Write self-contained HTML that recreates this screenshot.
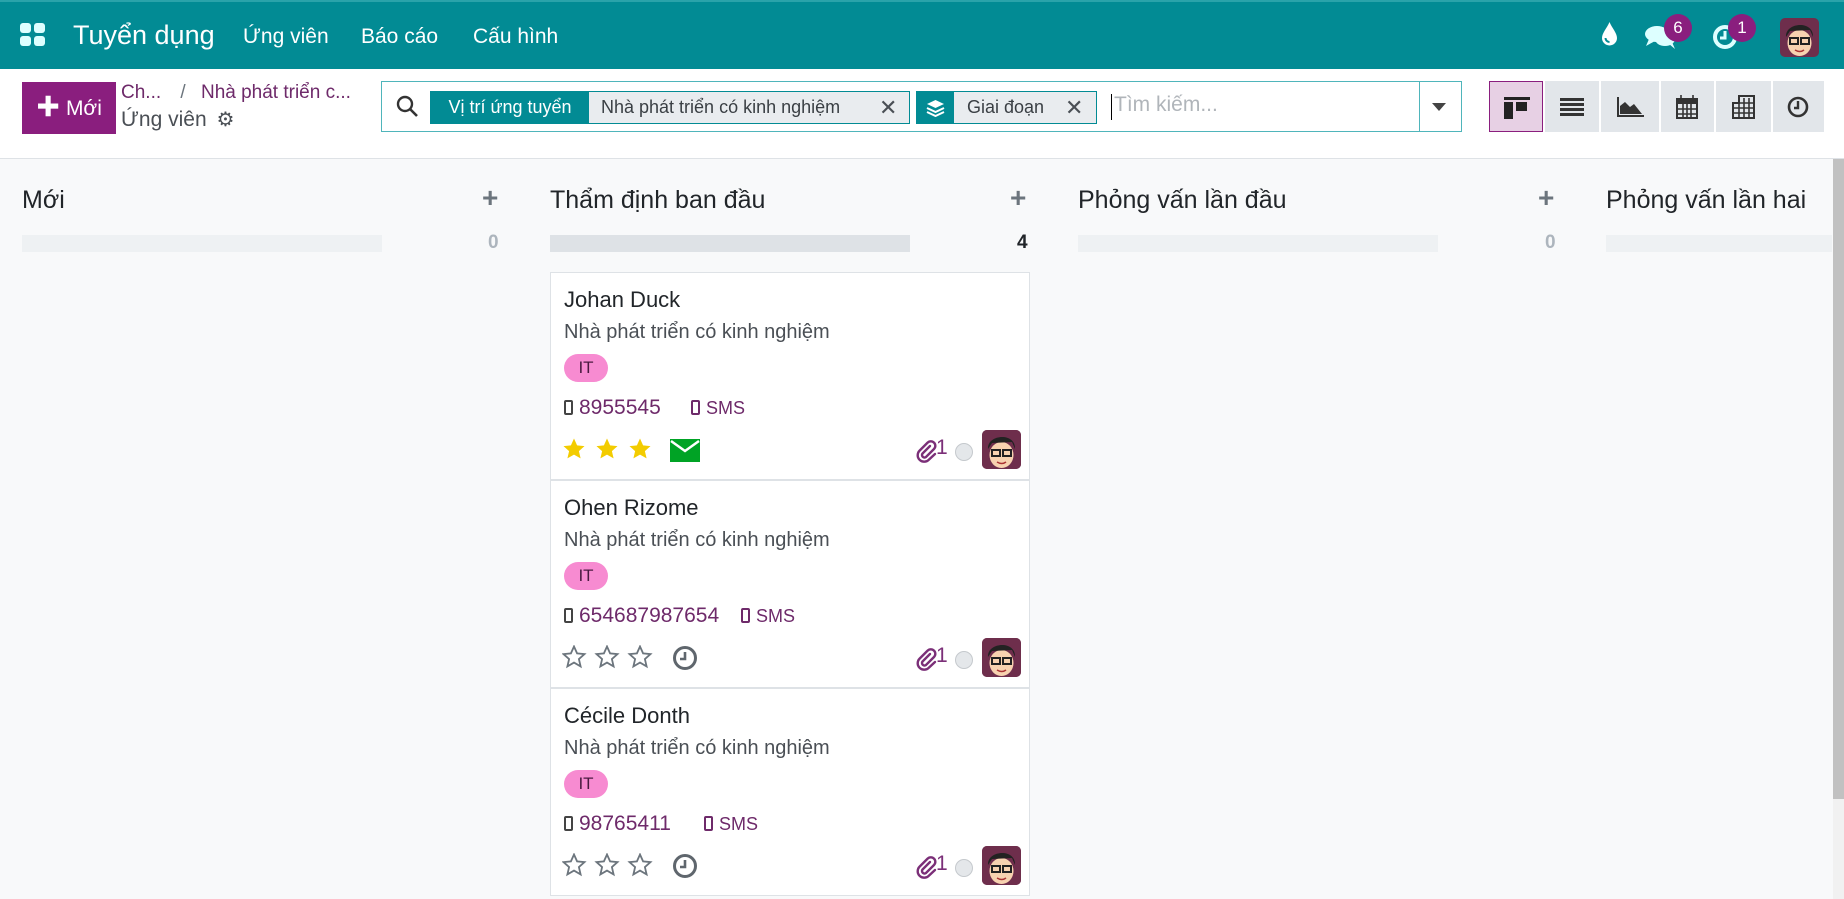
<!DOCTYPE html>
<html><head><meta charset="utf-8"><style>
*{box-sizing:border-box;margin:0;padding:0}
body{width:1844px;height:899px;overflow:hidden;font-family:"Liberation Sans","Noto Sans CJK SC",sans-serif;background:#f8f9fa;position:relative;color:#212529}
.a{position:absolute;white-space:nowrap}
.nav{left:0;top:0;width:1844px;height:69px;background:#028b94;border-top:2px solid #2aa3aa}
.nav .t{color:#fff}
.cp{left:0;top:69px;width:1844px;height:90px;background:#fff;border-bottom:1px solid #dee2e6}
.vb{top:81px;width:54px;height:51px;background:#e2e6ea}
.col-h{font-size:25px;color:#212529}
.plus{font-size:28px;color:#6c757d;font-weight:bold}
.bar{height:17px;background:#eef1f3}
.card{left:550px;width:480px;background:#fff;border:1px solid #dee2e6;height:208px}
.card .n{left:13px;top:14px;font-size:22px;color:#212529}
.card .j{left:13px;top:48px;font-size:20px;color:#4a4f55}
.card .tag{left:13px;top:81px;width:44px;height:28px;border-radius:14px;background:#f78bd1;color:#4a1a40;font-size:17px;text-align:center;line-height:28px}
.card .ph{left:13px;top:123px;font-size:21px;color:#6e2a6a}
.card .sms{top:125px;font-size:18px;color:#6e2a6a}
.card .clip{left:364px;top:163px;font-size:21px;color:#7b2f78}
.card .dot{left:404px;top:170px;width:18px;height:18px;border-radius:50%;background:#e4e7ea;border:1px solid #c5c9cd}
.card .av{left:431px;top:157px;width:39px;height:39px;border-radius:5px;background:#6e2e4c;overflow:hidden}
.pi{display:inline-block;width:9px;height:15px;border:2px solid currentColor;border-radius:2px;margin-right:6px;vertical-align:-1px}
</style></head><body>
<svg width="0" height="0" style="position:absolute"><defs>
<path id="star" d="M12 1.5l3.1 6.9 7.4.7-5.6 5 1.7 7.3L12 17.6 5.4 21.4l1.7-7.3-5.6-5 7.4-.7z"/>
<g id="clip"><path d="M15 7l-7.5 7.5a2.5 2.5 0 0 0 3.5 3.5l8-8a4.5 4.5 0 0 0-6.4-6.4l-8 8a6.5 6.5 0 0 0 9.2 9.2L20 15" stroke="#7b2f78" stroke-width="2.4" fill="none" stroke-linecap="round"/></g>
<g id="face"><rect width="39" height="39" fill="#6e2e4c"/><ellipse cx="19.5" cy="25" rx="12" ry="13" fill="#f7d2b0"/><path d="M6 19 C5 4 34 2 33 19 L30 12 L10 13z" fill="#222"/><rect x="10" y="20" width="8" height="6" fill="none" stroke="#222" stroke-width="2"/><rect x="21" y="20" width="8" height="6" fill="none" stroke="#222" stroke-width="2"/><path d="M15 32q5 3 9 0" stroke="#a33" stroke-width="1.5" fill="none"/></g>
</defs></svg>
<div class="a nav">
 <svg class="a" style="left:20px;top:21px" width="26" height="24" viewBox="0 0 26 24"><rect x="0" y="0" width="11" height="10" rx="3" fill="#dff"/><rect x="14" y="0" width="11" height="10" rx="3" fill="#dff"/><rect x="0" y="13" width="11" height="10" rx="3" fill="#dff"/><rect x="14" y="13" width="11" height="10" rx="3" fill="#dff"/></svg>
 <div class="a t" style="left:73px;top:18px;font-size:27px">Tuyển dụng</div>
 <div class="a t" style="left:243px;top:23px;font-size:21px">Ứng viên</div>
 <div class="a t" style="left:361px;top:23px;font-size:21px">Báo cáo</div>
 <div class="a t" style="left:473px;top:23px;font-size:21px">Cấu hình</div>
 <svg class="a" style="left:1601px;top:20px" width="17" height="24" viewBox="0 0 17 24"><path d="M8.5 0C6 6 1 11 1 16a7.5 7.5 0 0 0 15 0C16 11 11 6 8.5 0z" fill="#fff"/><path d="M4.5 16a4 4 0 0 0 4 4" stroke="#028b94" stroke-width="2" fill="none"/></svg>
 <svg class="a" style="left:1645px;top:22px" width="32" height="26" viewBox="0 0 32 26"><ellipse cx="12" cy="10" rx="12" ry="8" fill="#dff"/><path d="M4 15 L1 22 L10 17z" fill="#dff"/><ellipse cx="20" cy="15" rx="10" ry="7" fill="#dff"/><path d="M24 20 L30 25 L27 18z" fill="#dff"/></svg>
 <div class="a" style="left:1664px;top:12px;width:28px;height:28px;border-radius:50%;background:#8a1e7e;color:#fff;font-size:17px;text-align:center;line-height:28px">6</div>
 <svg class="a" style="left:1712px;top:22px" width="26" height="26" viewBox="0 0 26 26"><circle cx="13" cy="13" r="10" stroke="#dff" stroke-width="4" fill="none"/><path d="M13 7v7h-5" stroke="#dff" stroke-width="3" fill="none"/></svg>
 <div class="a" style="left:1728px;top:12px;width:28px;height:28px;border-radius:50%;background:#8a1e7e;color:#fff;font-size:17px;text-align:center;line-height:28px">1</div>
 <div class="a" style="left:1780px;top:16px;width:39px;height:39px;border-radius:5px;overflow:hidden"><svg width="39" height="39"><use href="#face"/></svg></div>
</div>
<div class="a cp">
 <div class="a" style="left:22px;top:13px;width:94px;height:52px;background:#8a1e7e;color:#fff;font-size:21px;line-height:52px;text-align:center"><b style="font-size:24px">✚</b> Mới</div>
 <div class="a" style="left:121px;top:13px;font-size:19px;color:#6e2a6a">Ch... <span style="color:#6c757d;margin:0 10px 0 14px">/</span> Nhà phát triển c...</div>
 <div class="a" style="left:121px;top:38px;font-size:21px;color:#4a4f55">Ứng viên <span style="font-size:20px;color:#4a4f55;margin-left:4px">⚙</span></div>
 <div class="a" style="left:381px;top:12px;width:1081px;height:51px;border:1px solid #4fb5bb;background:#fff">
  <svg class="a" style="left:13px;top:12px" width="24" height="24" viewBox="0 0 24 24"><circle cx="10" cy="10" r="7" stroke="#333" stroke-width="2.4" fill="none"/><path d="M15 15l7 7" stroke="#333" stroke-width="2.6"/></svg>
  <div class="a" style="left:48px;top:9px;width:480px;height:33px;border:1px solid #028b94;background:#e9ecef">
   <div class="a" style="left:0;top:0;width:158px;height:31px;background:#028b94;color:#fff;font-size:18px;line-height:31px;text-align:center">Vị trí ứng tuyển</div>
   <div class="a" style="left:170px;top:0;line-height:31px;font-size:18px;color:#3a3f44">Nhà phát triển có kinh nghiệm</div>
   <div class="a" style="left:448px;top:0;line-height:31px;font-size:22px;color:#4a4f55">✕</div>
  </div>
  <div class="a" style="left:534px;top:9px;width:181px;height:33px;border:1px solid #028b94;background:#e9ecef">
   <div class="a" style="left:0;top:0;width:37px;height:31px;background:#028b94"><svg style="margin:7px 9px" width="19" height="18" viewBox="0 0 19 18"><path d="M9.5 1L18 5 9.5 9 1 5z" fill="#fff"/><path d="M1 9l8.5 4 8.5-4M1 13l8.5 4 8.5-4" stroke="#fff" stroke-width="2" fill="none"/></svg></div>
   <div class="a" style="left:50px;top:0;line-height:31px;font-size:18px;color:#3a3f44">Giai đoạn</div>
   <div class="a" style="left:148px;top:0;line-height:31px;font-size:22px;color:#4a4f55">✕</div>
  </div>
  <div class="a" style="left:729px;top:12px;width:1px;height:26px;background:#000"></div>
  <div class="a" style="left:732px;top:11px;font-size:21px;color:#b0b5ba">Tìm kiếm...</div>
  <div class="a" style="left:1037px;top:0;width:1px;height:49px;background:#4fb5bb"></div>
  <div class="a" style="left:1050px;top:21px;width:0;height:0;border-left:7px solid transparent;border-right:7px solid transparent;border-top:8px solid #444"></div>
 </div>
</div>
<div class="a vb" style="left:1489px;background:#e7d0e4;border:1px solid #8a1e7e"><svg style="margin:15px 14px" width="26" height="22" viewBox="0 0 26 22"><rect x="0" y="0" width="26" height="3" fill="#222"/><rect x="0" y="5" width="9" height="17" fill="#222"/><rect x="12" y="5" width="11" height="9" fill="#222"/></svg></div>
<div class="a vb" style="left:1545px"><svg style="margin:17px 15px" width="24" height="18" viewBox="0 0 24 18"><rect y="0" width="24" height="3" fill="#333"/><rect y="5" width="24" height="3" fill="#333"/><rect y="10" width="24" height="3" fill="#333"/><rect y="15" width="24" height="3" fill="#333"/></svg></div>
<div class="a vb" style="left:1601px;width:58px"><svg style="margin:16px 16px" width="27" height="20" viewBox="0 0 27 20"><path d="M1 0v19h26" stroke="#333" stroke-width="2" fill="none"/><path d="M3 17V9l5-4 5 5 4-3 8 10z" fill="#333"/></svg></div>
<div class="a vb" style="left:1661px;width:53px"><svg style="margin:14px 15px" width="22" height="24" viewBox="0 0 22 24"><rect x="1" y="4" width="20" height="19" fill="none" stroke="#333" stroke-width="2"/><rect x="1" y="4" width="20" height="5" fill="#333"/><path d="M5 0v6M17 0v6M1 14h20M1 19h20M7 9v14M11 9v14M15 9v14" stroke="#333" stroke-width="1.6"/></svg></div>
<div class="a vb" style="left:1716px;width:55px"><svg style="margin:14px 16px" width="23" height="24" viewBox="0 0 23 24"><path d="M7 1h15v22H1V8h6z" fill="none" stroke="#333" stroke-width="2"/><path d="M1 13h21M1 18h21M7 8h15M7 3v20M12 3v20M17 3v20" stroke="#333" stroke-width="1.6"/></svg></div>
<div class="a vb" style="left:1773px;width:51px"><svg style="margin:15px 14px" width="22" height="22" viewBox="0 0 22 22"><circle cx="11" cy="11" r="9" stroke="#333" stroke-width="2.6" fill="none"/><path d="M11 5v7H7" stroke="#333" stroke-width="2.4" fill="none"/></svg></div>

<div class="a col-h" style="left:22px;top:186px">Mới</div>
<div class="a plus" style="left:482px;top:182px">+</div>
<div class="a bar" style="left:22px;top:235px;width:360px"></div>
<div class="a" style="left:488px;top:232px;font-size:19px;color:#adb5bd;font-weight:bold">0</div>

<div class="a col-h" style="left:550px;top:186px">Thẩm định ban đầu</div>
<div class="a plus" style="left:1010px;top:182px">+</div>
<div class="a bar" style="left:550px;top:235px;width:360px;background:#dee2e6"></div>
<div class="a" style="left:1017px;top:232px;font-size:19px;color:#212529;font-weight:bold">4</div>

<div class="a col-h" style="left:1078px;top:186px">Phỏng vấn lần đầu</div>
<div class="a plus" style="left:1538px;top:182px">+</div>
<div class="a bar" style="left:1078px;top:235px;width:360px"></div>
<div class="a" style="left:1545px;top:232px;font-size:19px;color:#adb5bd;font-weight:bold">0</div>

<div class="a col-h" style="left:1606px;top:186px">Phỏng vấn lần hai</div>
<div class="a bar" style="left:1606px;top:235px;width:226px"></div>
<div class="a" style="left:1833px;top:159px;width:11px;height:640px;background:#c1c1c1"></div>
<div class="a" style="left:1833px;top:799px;width:11px;height:100px;background:#f1f1f1"></div>

<div class="a card" style="top:272px">
 <div class="a n">Johan Duck</div><div class="a j">Nhà phát triển có kinh nghiệm</div><div class="a tag">IT</div>
 <div class="a ph"><span class="pi" style="color:#444"></span>8955545</div><div class="a sms" style="left:140px"><span class="pi"></span>SMS</div>
 <svg class="a" style="left:11px;top:164px" width="100" height="26"><g fill="#f3cc00"><use href="#star"/><use href="#star" x="33"/><use href="#star" x="66"/></g></svg>
 <div class="a" style="left:119px;top:166px;width:30px;height:23px;background:#00a325"><svg width="30" height="23"><path d="M1 2l14 10 14-10" stroke="#fff" stroke-width="2.5" fill="none"/></svg></div>
 <svg class="a" style="left:364px;top:166px" width="24" height="24"><use href="#clip"/></svg>
 <div class="a clip" style="left:385px">1</div><div class="a dot"></div>
 <div class="a av"><svg width="39" height="39"><use href="#face"/></svg></div>
</div>
<div class="a card" style="top:480px">
 <div class="a n">Ohen Rizome</div><div class="a j">Nhà phát triển có kinh nghiệm</div><div class="a tag">IT</div>
 <div class="a ph"><span class="pi" style="color:#444"></span>654687987654</div><div class="a sms" style="left:190px"><span class="pi"></span>SMS</div>
 <svg class="a" style="left:11px;top:164px" width="100" height="26"><g fill="none" stroke="#6c757d" stroke-width="1.8"><use href="#star"/><use href="#star" x="33"/><use href="#star" x="66"/></g></svg>
 <svg class="a" style="left:121px;top:164px" width="26" height="26" viewBox="0 0 26 26"><circle cx="13" cy="13" r="10.5" stroke="#5f666d" stroke-width="3" fill="none"/><path d="M13 7v7h-5" stroke="#5f666d" stroke-width="2.6" fill="none"/></svg>
 <svg class="a" style="left:364px;top:166px" width="24" height="24"><use href="#clip"/></svg>
 <div class="a clip" style="left:385px">1</div><div class="a dot"></div>
 <div class="a av"><svg width="39" height="39"><use href="#face"/></svg></div>
</div>
<div class="a card" style="top:688px">
 <div class="a n">Cécile Donth</div><div class="a j">Nhà phát triển có kinh nghiệm</div><div class="a tag">IT</div>
 <div class="a ph"><span class="pi" style="color:#444"></span>98765411</div><div class="a sms" style="left:153px"><span class="pi"></span>SMS</div>
 <svg class="a" style="left:11px;top:164px" width="100" height="26"><g fill="none" stroke="#6c757d" stroke-width="1.8"><use href="#star"/><use href="#star" x="33"/><use href="#star" x="66"/></g></svg>
 <svg class="a" style="left:121px;top:164px" width="26" height="26" viewBox="0 0 26 26"><circle cx="13" cy="13" r="10.5" stroke="#5f666d" stroke-width="3" fill="none"/><path d="M13 7v7h-5" stroke="#5f666d" stroke-width="2.6" fill="none"/></svg>
 <svg class="a" style="left:364px;top:166px" width="24" height="24"><use href="#clip"/></svg>
 <div class="a clip" style="left:385px">1</div><div class="a dot"></div>
 <div class="a av"><svg width="39" height="39"><use href="#face"/></svg></div>
</div>
</body></html>
